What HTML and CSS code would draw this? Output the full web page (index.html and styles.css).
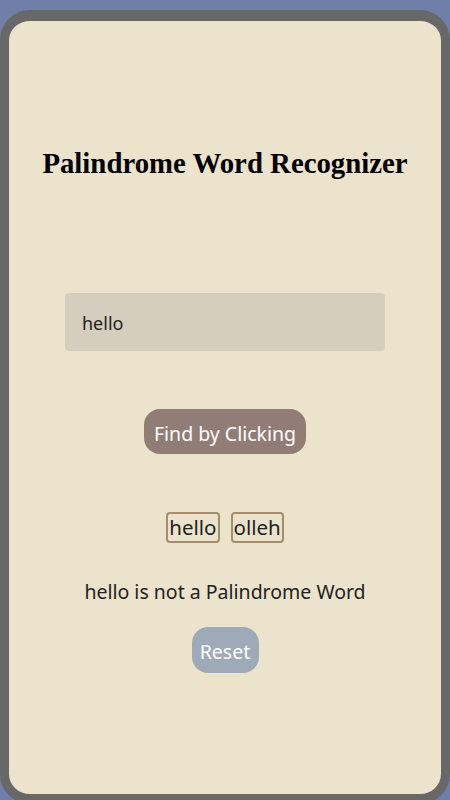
FILE: index.html
```html
<!DOCTYPE html>
<html>
<head>
<meta charset="utf-8">
<link rel="stylesheet" href="styles.css">
</head>
<body>
<div class="phone">
  <h1 class="title">Palindrome Word Recognizer</h1>
  <div class="input">hello</div>
  <button class="find">Find by Clicking</button>
  <div class="words">
    <span class="word">hello</span>
    <span class="word">olleh</span>
  </div>
  <p class="result">hello is not a Palindrome Word</p>
  <button class="reset">Reset</button>
</div>
</body>
</html>
```
FILE: styles.css
```css
html, body {
  margin: 0;
  padding: 0;
  background: #707fa9;
  overflow: hidden;
}
body {
  padding-top: 10px;
  font-family: "Noto Sans", "Open Sans", sans-serif;
}
.phone {
  box-sizing: border-box;
  width: 450px;
  height: 794px;
  border: 10px solid #686868;
  border-top-width: 11px;
  border-left-width: 9px;
  border-right-width: 9px;
  border-radius: 30px;
  background: #ebe3cc;
  display: flex;
  flex-direction: column;
  align-items: center;
}
.title {
  margin: 127px 0 0;
  font-family: "Liberation Serif", serif;
  font-weight: bold;
  font-size: 28.8px;
  line-height: 30px;
  color: #000;
}
.input {
  box-sizing: border-box;
  margin-top: 115px;
  width: 320px;
  height: 58px;
  background: #d5cdbd;
  border-radius: 4px;
  padding: 2px 17px 0;
  display: flex;
  align-items: center;
  font-size: 18px;
  color: #222;
}
.find {
  box-sizing: border-box;
  margin-top: 58px;
  width: 162px;
  height: 45px;
  border: none;
  border-radius: 16px;
  background: #917d75;
  color: #fff;
  font-family: inherit;
  font-size: 19.5px;
  padding: 3px 0 0;
}
.words {
  margin-top: 58px;
  display: flex;
  gap: 11px;
}
.word {
  box-sizing: border-box;
  height: 31px;
  border: 2px solid #a58d6c;
  border-radius: 4px;
  font-size: 20.5px;
  line-height: 27px;
  padding: 0 1px;
  color: #222;
}
.result {
  margin: 37px 0 0;
  font-size: 19.5px;
  line-height: 24px;
  color: #222;
}
.reset {
  box-sizing: border-box;
  margin-top: 23px;
  width: 67px;
  height: 46px;
  border: none;
  border-radius: 16px;
  background: #9eaab8;
  color: #fff;
  font-family: inherit;
  font-size: 19.5px;
  padding: 3px 0 0;
}
```
